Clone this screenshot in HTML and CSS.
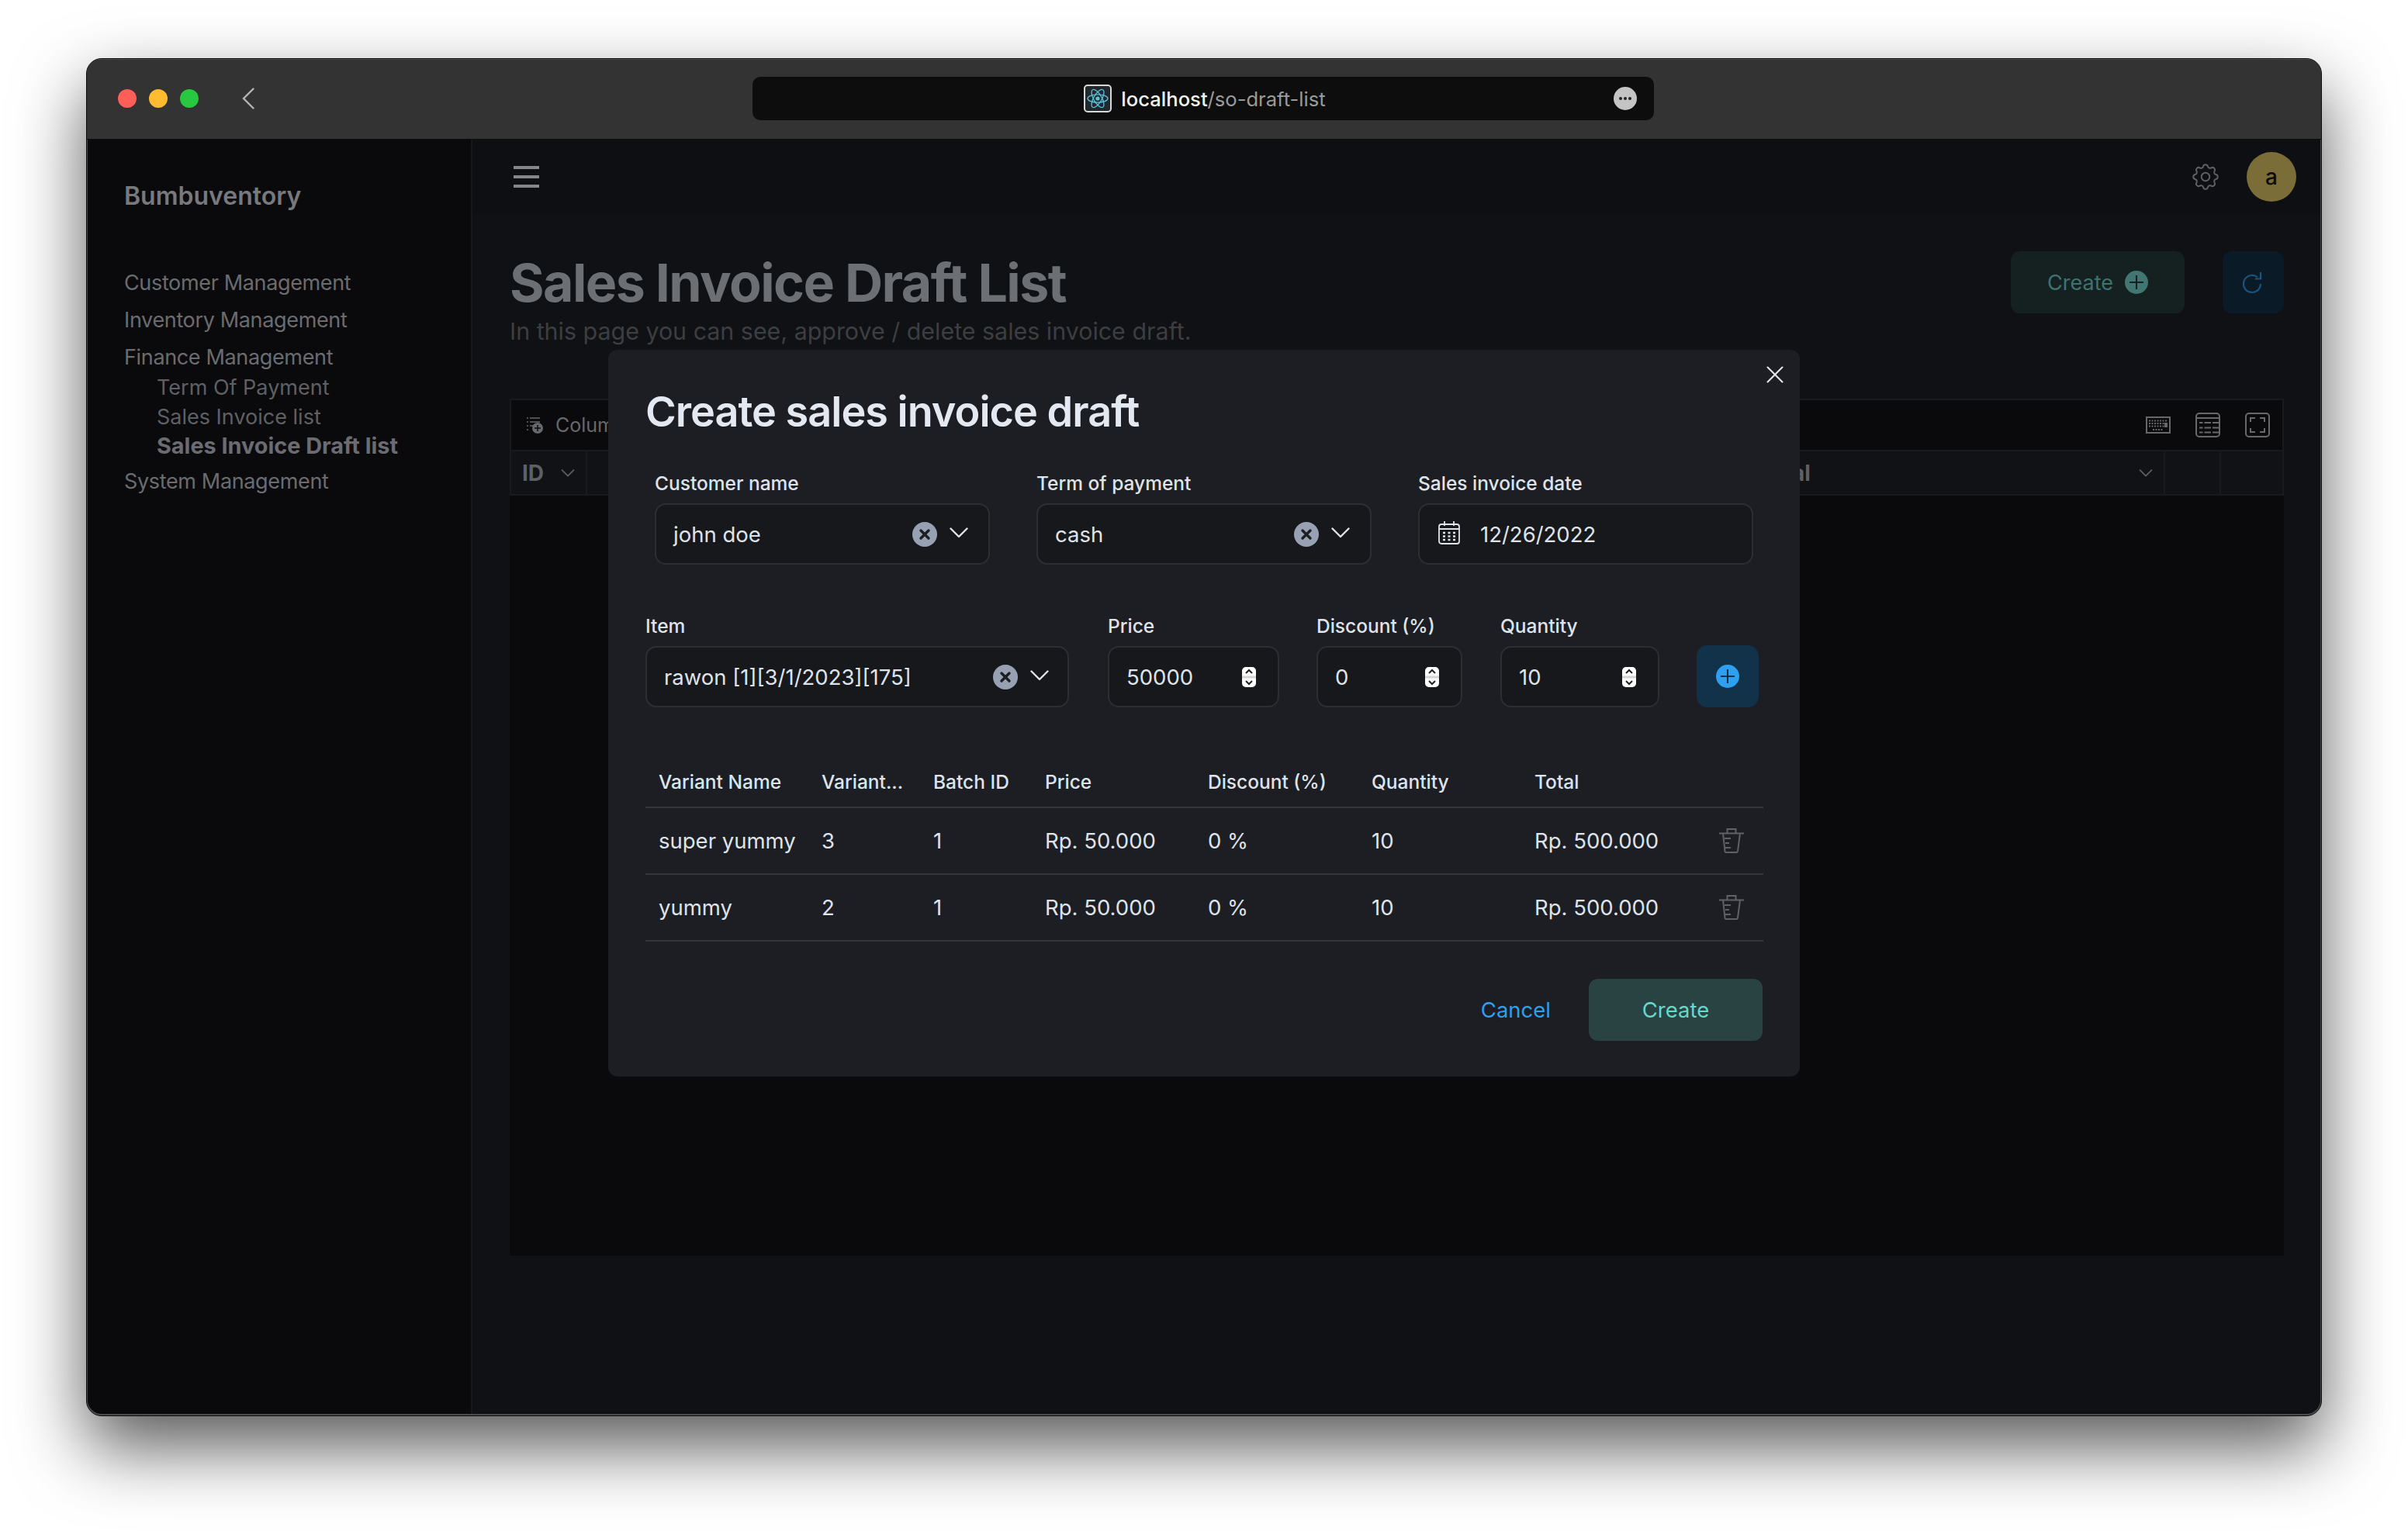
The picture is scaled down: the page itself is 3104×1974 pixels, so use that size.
FILE: index.html
```html
<!DOCTYPE html>
<html lang="en">
<head>
<meta charset="utf-8">
<title>Sales Invoice Draft List</title>
<link rel="stylesheet" href="styles.css">
</head>
<body>
<svg class="defs" width="0" height="0" aria-hidden="true">
  <symbol id="i-x" viewBox="0 0 32 32"><circle cx="16" cy="16" r="16" fill="#98a1b3"/><path d="M11 11l10 10M21 11L11 21" stroke="#1c1e23" stroke-width="3.4" stroke-linecap="round"/></symbol>
  <symbol id="i-chev" viewBox="0 0 24 14"><path d="M1.500 1.500L12 12L22.500 1.500" fill="none" stroke="currentColor" stroke-width="2.400" stroke-linecap="round" stroke-linejoin="round"/></symbol>
  <symbol id="i-spin" viewBox="0 0 18 26"><rect width="18" height="26" rx="5" fill="#fff"/><rect y="11.500" width="18" height="3" fill="#d5d5d5"/><path d="M5 8l4-4 4 4M5 18l4 4 4-4" fill="none" stroke="#222" stroke-width="2"/></symbol>
  <symbol id="i-trash" viewBox="0 0 32 32"><path d="M0 6.500h32M10.500 6.500V1h11v5.500M5 6.500l2.500 23a1.500 1.500 0 0 0 1.500 1.500h13a2 2 0 0 0 2-1.500l3-23M7 13h8M8 19h5M8 25h7" fill="none" stroke="#5f6165" stroke-width="2"/></symbol>
  <symbol id="i-plus" viewBox="0 0 32 32"><circle cx="16" cy="16" r="16" fill="currentColor"/><path d="M16 6.500v19M6.500 16h19" stroke="var(--plus)" stroke-width="2.200"/></symbol>
</svg>

<div class="window">
  <div class="titlebar">
    <div class="lights">
      <span class="light light-red"></span>
      <span class="light light-yellow"></span>
      <span class="light light-green"></span>
    </div>
    <svg class="back" viewBox="0 0 18 28" width="18" height="28"><path d="M15.500 1.500L3 14l12.500 12.500" fill="none" stroke="#b5b5b5" stroke-width="2.400" stroke-linecap="round"/></svg>
    <div class="urlbar">
      <span class="url">
        <svg class="react" viewBox="0 0 36 36" width="36" height="36">
          <rect x="1" y="1" width="34" height="34" rx="4" fill="#23272e" stroke="#d8d8d8" stroke-width="2"/>
          <g fill="none" stroke="#58c4dc" stroke-width="1.300">
            <ellipse cx="18" cy="18" rx="13" ry="5.200"/>
            <ellipse cx="18" cy="18" rx="13" ry="5.200" transform="rotate(60 18 18)"/>
            <ellipse cx="18" cy="18" rx="13" ry="5.200" transform="rotate(120 18 18)"/>
          </g>
          <circle cx="18" cy="18" r="2.600" fill="#58c4dc"/>
        </svg>
        <span class="host">localhost</span><span class="path">/so-draft-list</span>
      </span>
      <span class="more"><i></i><i></i><i></i></span>
    </div>
  </div>

  <div class="app">
    <aside class="sidebar">
      <div class="brand">Bumbuventory</div>
      <nav class="nav">
        <a class="nav-item">Customer Management</a>
        <a class="nav-item">Inventory Management</a>
        <div>
          <a class="nav-item">Finance Management</a>
          <a class="nav-sub">Term Of Payment</a>
          <a class="nav-sub">Sales Invoice list</a>
          <a class="nav-sub nav-active">Sales Invoice Draft list</a>
        </div>
        <a class="nav-item">System Management</a>
      </nav>
    </aside>

    <main class="main">
      <header class="topbar">
        <div class="burger"><i></i><i></i><i></i></div>
        <svg class="gear" viewBox="0 0 24 24" width="42" height="42"><path d="M10.325 4.317c.426 -1.756 2.924 -1.756 3.350 0a1.724 1.724 0 0 0 2.573 1.066c1.543 -.94 3.310 .826 2.370 2.370a1.724 1.724 0 0 0 1.065 2.572c1.756 .426 1.756 2.924 0 3.350a1.724 1.724 0 0 0 -1.066 2.573c.94 1.543 -.826 3.310 -2.370 2.370a1.724 1.724 0 0 0 -2.572 1.065c-.426 1.756 -2.924 1.756 -3.350 0a1.724 1.724 0 0 0 -2.573 -1.066c-1.543 .94 -3.310 -.826 -2.370 -2.370a1.724 1.724 0 0 0 -1.065 -2.572c-1.756 -.426 -1.756 -2.924 0 -3.350a1.724 1.724 0 0 0 1.066 -2.573c-.94 -1.543 .826 -3.310 2.370 -2.370c1 .608 2.296 .07 2.572 -1.065z" fill="none" stroke="#5d5f63" stroke-width="1.150"/><circle cx="12" cy="12" r="3" fill="none" stroke="#5d5f63" stroke-width="1.150"/></svg>
        <div class="avatar">a</div>
      </header>

      <section class="content">
        <div class="page-head">
          <div>
            <h1 class="page-title">Sales Invoice Draft List</h1>
            <p class="page-sub">In this page you can see, approve / delete sales invoice draft.</p>
          </div>
          <div class="page-actions">
            <button class="btn-create-dim">Create <svg class="plus-dim" width="30" height="30"><use href="#i-plus"/></svg></button>
            <button class="btn-refresh"><svg viewBox="0 0 26 30" width="26" height="30"><path d="M20 8.500A11 11 0 1 0 24 17M24 2v8.500h-7" fill="none" stroke="#1c547e" stroke-width="2.200"/></svg></button>
          </div>
        </div>

        <div class="grid">
          <div class="grid-toolbar">
            <span class="columns">
              <svg viewBox="0 0 22 22" width="22" height="22"><path d="M1 2h2M5 2h13M1 7h2M5 7h13M1 12h2M5 12h5M1 17h2" stroke="#66686c" stroke-width="1.500"/><circle cx="15" cy="15" r="7" fill="#66686c"/><path d="M15 11v8M11 15h8" stroke="#0a0a0c" stroke-width="1.500"/></svg>
              <span>Columns</span>
            </span>
            <span class="grid-tools">
              <svg viewBox="0 0 32 22" width="32" height="22"><rect x="1" y="1" width="30" height="20" fill="none" stroke="#66686c" stroke-width="2"/><path d="M4 5.500h24M4 9h20M4 12.500h20M9 17h14" stroke="#66686c" stroke-width="2" stroke-dasharray="2 1.500"/><rect x="24" y="8" width="4" height="6" fill="#66686c"/></svg>
              <svg viewBox="0 0 32 32" width="32" height="32"><rect x="1" y="1" width="30" height="30" rx="4" fill="none" stroke="#66686c" stroke-width="2"/><path d="M1 7h30M5 13h26M5 19.500h26M5 25.500h26" stroke="#66686c" stroke-width="2"/><path d="M10.500 10v18M21 10v18" stroke="#0a0a0c" stroke-width="2"/></svg>
              <svg viewBox="0 0 32 32" width="32" height="32"><rect x="1" y="1" width="30" height="30" rx="4" fill="none" stroke="#66686c" stroke-width="2"/><path d="M7 12V7h6M19 7h6v5M25 20v5h-6M13 25H7v-5" fill="none" stroke="#66686c" stroke-width="2"/></svg>
            </span>
          </div>
          <div class="grid-head">
            <span class="gh gh-id">ID<svg class="gh-chev" width="18" height="10"><use href="#i-chev"/></svg></span>
            <span class="gh gh-total">Total<svg class="gh-chev" width="18" height="10"><use href="#i-chev"/></svg></span>
            <span class="gh gh-blank"></span>
            <span class="gh gh-blank gh-last"></span>
          </div>
          <div class="grid-body"></div>
        </div>
      </section>
    </main>
  </div>

  <div class="modal">
    <svg class="modal-close" viewBox="0 0 22 22" width="22" height="22"><path d="M1.500 1.500l19 19M20.500 1.500l-19 19" stroke="#e4e6ea" stroke-width="2" stroke-linecap="round"/></svg>
    <h2 class="modal-title">Create sales invoice draft</h2>

    <div class="row-top">
      <label class="field">
        <span class="label">Customer name</span>
        <span class="input"><span class="val">john doe</span><svg class="clear" width="32" height="32"><use href="#i-x"/></svg><svg class="chev" width="24" height="14"><use href="#i-chev"/></svg></span>
      </label>
      <label class="field">
        <span class="label">Term of payment</span>
        <span class="input"><span class="val">cash</span><svg class="clear" width="32" height="32"><use href="#i-x"/></svg><svg class="chev" width="24" height="14"><use href="#i-chev"/></svg></span>
      </label>
      <label class="field">
        <span class="label">Sales invoice date</span>
        <span class="input">
          <svg class="cal" viewBox="0 0 28 30" width="28" height="30"><rect x="1" y="4" width="26" height="25" rx="3" fill="none" stroke="#dfe3ea" stroke-width="1.800"/><path d="M1 10h26M8 0v6M20 0v6" stroke="#dfe3ea" stroke-width="1.800"/><path d="M6 15h3M12.500 15h3M19 15h3M6 19.500h3M12.500 19.500h3M19 19.500h3M6 24h3M12.500 24h3M19 24h3" stroke="#dfe3ea" stroke-width="2.400"/></svg>
          <span class="val">12/26/2022</span>
        </span>
      </label>
    </div>

    <div class="row-item">
      <label class="field f-item">
        <span class="label">Item</span>
        <span class="input"><span class="val">rawon [1][3/1/2023][175]</span><svg class="clear" width="32" height="32"><use href="#i-x"/></svg><svg class="chev" width="24" height="14"><use href="#i-chev"/></svg></span>
      </label>
      <label class="field f-price">
        <span class="label">Price</span>
        <span class="input"><span class="val">50000</span><svg class="spin" width="18" height="26"><use href="#i-spin"/></svg></span>
      </label>
      <label class="field f-disc">
        <span class="label">Discount (%)</span>
        <span class="input"><span class="val">0</span><svg class="spin" width="18" height="26"><use href="#i-spin"/></svg></span>
      </label>
      <label class="field f-qty">
        <span class="label">Quantity</span>
        <span class="input"><span class="val">10</span><svg class="spin" width="18" height="26"><use href="#i-spin"/></svg></span>
      </label>
      <button class="btn-add"><svg class="plus-add" width="30" height="30"><use href="#i-plus"/></svg></button>
    </div>

    <table class="lines">
      <colgroup>
        <col class="c1"><col class="c2"><col class="c3"><col class="c4"><col class="c5"><col class="c6"><col class="c7"><col class="c8">
      </colgroup>
      <thead>
        <tr><th>Variant Name</th><th>Variant...</th><th>Batch ID</th><th>Price</th><th>Discount (%)</th><th>Quantity</th><th>Total</th><th></th></tr>
      </thead>
      <tbody>
        <tr><td>super yummy</td><td>3</td><td>1</td><td>Rp. 50.000</td><td>0 %</td><td>10</td><td>Rp. 500.000</td><td class="td-del"><svg width="32" height="32"><use href="#i-trash"/></svg></td></tr>
        <tr><td>yummy</td><td>2</td><td>1</td><td>Rp. 50.000</td><td>0 %</td><td>10</td><td>Rp. 500.000</td><td class="td-del"><svg width="32" height="32"><use href="#i-trash"/></svg></td></tr>
      </tbody>
    </table>

    <div class="modal-foot">
      <button class="btn-cancel">Cancel</button>
      <button class="btn-submit">Create</button>
    </div>
  </div>
</div>
</body>
</html>
```

FILE: styles.css
```css
* { box-sizing: border-box; }
html, body { margin: 0; height: 100%; }
body {
  background: #fff;
  padding: 75px 111px 0;
  font-family: Inter, "Liberation Sans", sans-serif;
  overflow: hidden;
}
.defs { position: absolute; }
i { display: block; }
svg { display: block; flex: none; }

.window {
  position: relative;
  width: 2882px;
  height: 1751px;
  border: 1px solid #0b0b0b;
  border-radius: 20px;
  background: #4a4a4a;
  padding: 0 1px 2px;
  box-shadow: 0 40px 90px rgba(0, 0, 0, .65);
  display: flex;
  flex-direction: column;
  overflow: hidden;
}
.titlebar {
  flex: none;
  height: 104px;
  margin: 0 -1px;
  background: #333;
  border-top: 1px solid #4b4b4b;
  border-bottom: 1px solid #0c0c0c;
  display: flex;
  align-items: center;
  padding: 0 0 2px 40px;
}
.lights { display: flex; gap: 16px; }
.light { width: 24px; height: 24px; border-radius: 50%; }
.light-red { background: #ff5f57; }
.light-yellow { background: #febc2e; }
.light-green { background: #28c840; }
.back { margin-left: 55px; }
.urlbar {
  width: 1162px;
  height: 56px;
  margin-left: 641px;
  background: #0d0d0d;
  border-radius: 10px;
  position: relative;
  display: flex;
  align-items: center;
  justify-content: center;
}
.url { display: flex; align-items: center; font-size: 25.600px; margin-left: 4px; }
.react { margin-right: 12px; }
.host { color: #f2f2f2; font-weight: 500; }
.path { color: #9b9b9b; }
.more {
  position: absolute;
  right: 22px;
  top: 13px;
  width: 30px;
  height: 30px;
  border-radius: 50%;
  background: #c4c4c4;
  display: flex;
  align-items: center;
  justify-content: center;
  gap: 2px;
}
.more i { width: 4px; height: 4px; border-radius: 50%; background: #222; }

.app { flex: 1; display: flex; min-height: 0; border-radius: 0 0 18px 18px; overflow: hidden; }
.sidebar {
  flex: none;
  width: 496px;
  background: #0a0a0c;
  border-right: 2px solid #17181b;
  padding: 53px 0 0 47px;
}
.brand { font-size: 32px; font-weight: 600; line-height: 40px; color: #77797c; }
.nav { margin-top: 72px; display: flex; flex-direction: column; gap: 8px; }
.nav-item { display: block; font-size: 27px; letter-spacing: -.35px; line-height: 40px; color: #6a6c70; }
.nav-sub { display: block; font-size: 27px; line-height: 37.500px; padding-left: 42px; color: #5e6064; }
.nav-active { font-size: 28.800px; font-weight: 700; color: #6a6c72; }
.nav > .nav-item:last-child { margin-top: -1px; }

.main { flex: 1; min-width: 0; background: #0f1114; }
.topbar {
  height: 96px;
  background: #0e0f12;
  display: flex;
  align-items: center;
  padding: 0 31px 0 53px;
}
.burger { display: flex; flex-direction: column; gap: 8px; margin-right: auto; }
.burger i { width: 33px; height: 4px; background: #86878a; }
.gear { margin-right: 32px; }
.avatar {
  width: 64px;
  height: 64px;
  border-radius: 50%;
  background: #7a6d38;
  color: #0b0b0b;
  font-size: 28px;
  font-weight: 500;
  display: flex;
  align-items: center;
  justify-content: center;
}
.content { padding: 48px 47px 0 48px; }
.page-head { display: flex; justify-content: space-between; align-items: flex-start; }
.page-title { margin: 0; font-size: 68px; letter-spacing: -1.550px; font-weight: 700; line-height: 80px; color: #6c6f74; }
.page-sub { margin: 3px 0 0; font-size: 30.400px; line-height: 40px; color: #3c3e42; }
.page-actions { display: flex; gap: 49px; }
.btn-create-dim {
  width: 224px;
  height: 80px;
  background: #152121;
  border: 0;
  border-radius: 12px;
  color: #3f7370;
  font: 400 27px Inter, sans-serif;
  display: flex;
  align-items: center;
  justify-content: center;
  gap: 15px;
}
.plus-dim { color: #427672; --plus: #152121; }
.btn-refresh {
  width: 79px;
  height: 80px;
  background: #0a1a26;
  border: 0;
  border-radius: 12px;
  padding: 0 3px 0 0;
  display: flex;
  align-items: center;
  justify-content: center;
}

.grid { margin-top: 67px; height: 1105px; background: #0a0a0c; display: flex; flex-direction: column; }
.grid-toolbar {
  flex: none;
  height: 66px;
  display: flex;
  align-items: center;
  justify-content: space-between;
  padding: 0 16px 0 19px;
  border: 2px solid #191a1e;
  border-bottom: 0;
}
.columns { display: flex; align-items: center; gap: 16px; font-size: 25px; color: #66686c; }
.grid-tools { display: flex; align-items: center; gap: 32px; }
.grid-head { flex: none; height: 59px; display: flex; background: #111216; border: 2px solid #191a1e; }
.gh { display: flex; align-items: center; font-size: 28px; font-weight: 700; color: #5e6064; border-right: 2px solid #191a1e; }
.gh-chev { color: #5e6064; }
.gh-id { width: 98px; padding-left: 14px; gap: 22px; }
.gh-total { flex: 1; padding-left: 1509px; justify-content: space-between; padding-right: 14px; }
.gh-blank { width: 72px; }
.gh-last { width: 79px; border-right: 0; }
.grid-body { flex: 1; }

.modal {
  position: absolute;
  left: 672px;
  top: 375px;
  width: 1536px;
  padding: 48px 48px 46px 48px;
  background: #1c1e23;
  border-radius: 12px;
  color: #dfe3ea;
}
.modal-close { position: absolute; top: 21px; right: 21px; }
.modal-title { margin: 0; font-size: 54px; letter-spacing: -1px; font-weight: 600; line-height: 64px; color: #e4e8f1; }
.field { display: block; }
.label { display: block; font-size: 24.500px; font-weight: 500; line-height: 30px; color: #dfe3ea; margin-bottom: 11px; }
.row-top { margin: 45px 0 0 12px; display: grid; grid-template-columns: 432px 432px 432px; gap: 60px; }
.input {
  height: 79px;
  background: #17181c;
  border: 2px solid #2c2e33;
  border-radius: 14px;
  display: flex;
  align-items: center;
  padding: 0 22px;
}
.val { font-size: 27.500px; color: #dfe3ea; margin-right: auto; }
.clear { margin-right: 16px; }
.chev { margin-top: -3px; margin-right: 4px; color: #dfe3ea; }
.cal { margin-left: 2px; margin-right: 26px; margin-top: -4px; }
.spin { margin-right: 6px; }
.row-item { margin-top: 64px; display: flex; align-items: flex-end; gap: 50px; }
.f-item { width: 546px; }
.f-item .chev { margin-right: 2px; }
.f-price { width: 221px; }
.f-disc { width: 188px; margin-left: -2px; }
.f-qty { width: 205px; margin-left: -1px; margin-right: -2px; }
.btn-add {
  width: 80px;
  height: 80px;
  background: #12324a;
  border: 0;
  border-radius: 14px;
  display: flex;
  align-items: center;
  justify-content: center;
  padding: 0;
}
.plus-add { color: #2f9ff0; --plus: #12324a; }

.lines { margin-top: 63px; width: 1441px; border-collapse: collapse; table-layout: fixed; }
.c1 { width: 210px; } .c2 { width: 144px; } .c3 { width: 144px; } .c4 { width: 210px; }
.c5 { width: 211px; } .c6 { width: 210px; } .c7 { width: 231px; } .c8 { width: 81px; }
.lines th {
  height: 66px;
  padding: 0 0 0 17px;
  text-align: left;
  font-size: 24.500px;
  font-weight: 500;
  color: #dfe3ea;
  border-bottom: 2px solid #33353d;
}
.lines td {
  height: 86px;
  padding: 0 0 0 17px;
  font-size: 27.500px;
  color: #dfe3ea;
  border-bottom: 2px solid #33353d;
}
.lines .td-del { padding: 0 0 0 24px; }
.modal-foot { margin-top: 48px; display: flex; justify-content: flex-end; align-items: center; gap: 49px; }
.btn-cancel { background: none; border: 0; padding: 0; color: #2f9ff0; font: 400 27.500px Inter, sans-serif; }
.btn-submit {
  width: 224px;
  height: 80px;
  background: #294242;
  border: 0;
  border-radius: 12px;
  color: #66d9c9;
  font: 400 27.500px Inter, sans-serif;
}
```
